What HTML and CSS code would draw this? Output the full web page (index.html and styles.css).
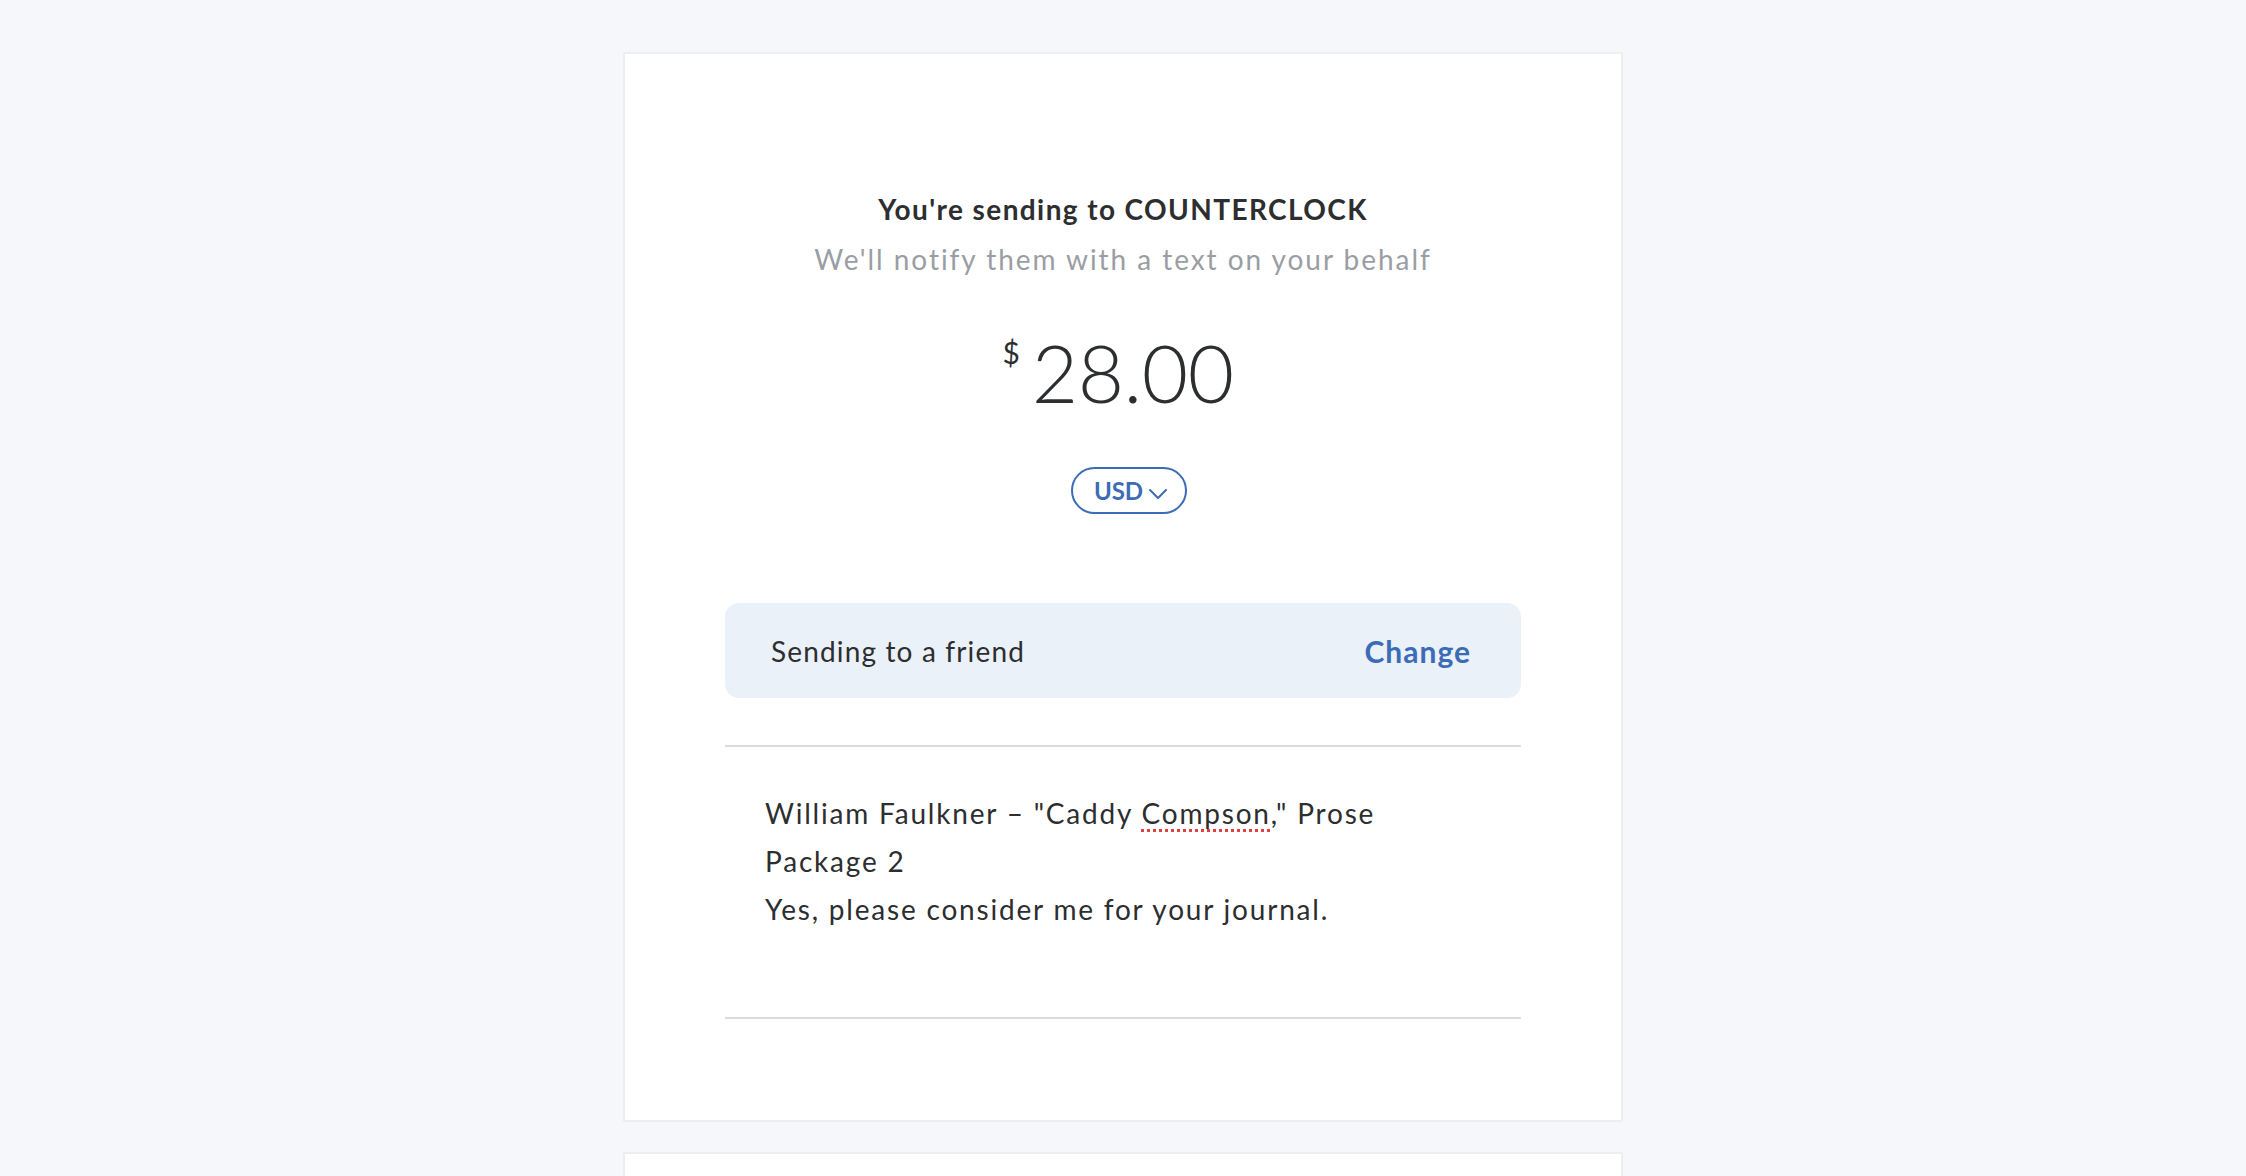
FILE: index.html
```html
<!DOCTYPE html>
<html lang="en">
<head>
<meta charset="utf-8">
<title>Send money</title>
<link rel="stylesheet" href="styles.css">
</head>
<body>
<main class="page">
  <section class="card">
    <h1 class="title">You're sending to COUNTERCLOCK</h1>
    <p class="subtitle">We'll notify them with a text on your behalf</p>
    <div class="amount">
      <span class="currency-symbol">$</span><span class="value">28.00</span>
    </div>
    <div class="currency-row">
      <button class="currency-pill" type="button">USD<svg class="chevron" viewBox="0 0 20 12" width="20" height="12"><path d="M2 2 L10 10 L18 2" fill="none" stroke="currentColor" stroke-width="2" stroke-linecap="round" stroke-linejoin="round"/></svg></button>
    </div>
    <div class="send-type">
      <span class="send-type-label">Sending to a friend</span>
      <a class="send-type-change" href="#">Change</a>
    </div>
    <div class="note">
      <p class="note-line">William Faulkner – "Caddy <span class="misspelled">Compson</span>," Prose</p>
      <p class="note-line">Package 2</p>
      <p class="note-line">Yes, please consider me for your journal.</p>
    </div>
  </section>
  <section class="card card-next"></section>
</main>
</body>
</html>
```

FILE: styles.css
```css
html, body {
  margin: 0;
  padding: 0;
}

body {
  background: #f5f7fa;
  font-family: Lato, "Open Sans", "Liberation Sans", sans-serif;
  color: #2c2e2f;
  overflow: hidden;
  height: 1176px;
}

.page {
  padding-top: 52px;
  display: flex;
  flex-direction: column;
  align-items: center;
  gap: 30px;
}

.card {
  background: #ffffff;
  border: 2px solid #eeeeee;
  padding: 137px 100px 101px;
  box-sizing: content-box;
  width: 796px;
}

.card-next {
  height: 200px;
  padding: 0;
  width: 996px;
}

.title {
  margin: 0;
  text-align: center;
  font-size: 28px;
  line-height: 36px;
  font-weight: 700;
  letter-spacing: 1.4px;
  color: #2c2e2f;
}

.subtitle {
  margin: 14px 0 0;
  text-align: center;
  font-size: 28px;
  line-height: 36px;
  font-weight: 400;
  letter-spacing: 1.95px;
  color: #9a9ea3;
}

.amount {
  margin-top: 45px;
  height: 100px;
  display: flex;
  justify-content: center;
  align-items: flex-start;
  padding-right: 10px;
}

.currency-symbol {
  font-size: 30px;
  line-height: 40px;
  margin-top: 10px;
  margin-right: 12px;
  font-weight: 400;
}

.value {
  font-size: 80px;
  line-height: 100px;
  font-weight: 300;
  letter-spacing: -0.5px;
}

.currency-row {
  margin-top: 45px;
  display: flex;
  justify-content: center;
  padding-left: 12px;
}

.currency-pill {
  display: flex;
  align-items: center;
  gap: 5px;
  height: 47px;
  width: 116px;
  justify-content: center;
  box-sizing: border-box;
  border: 2px solid #3b6cb5;
  border-radius: 24px;
  background: #ffffff;
  color: #3b6cb5;
  font-family: inherit;
  font-size: 24px;
  font-weight: 700;
  padding: 0 0 0 4px;
}

.chevron {
  margin-top: 6px;
}

.send-type {
  margin-top: 89px;
  height: 95px;
  background: #ebf1f9;
  border-radius: 14px;
  display: flex;
  align-items: center;
  justify-content: space-between;
  padding: 0 50px 0 46px;
}

.send-type-label {
  font-size: 28px;
  letter-spacing: 1.15px;
  color: #2c2e2f;
}

.send-type-change {
  font-size: 30px;
  font-weight: 700;
  color: #3b6cb5;
  text-decoration: none;
  letter-spacing: 1px;
}

.note {
  margin-top: 47px;
  border-top: 2px solid #dcdcdc;
  border-bottom: 2px solid #dcdcdc;
  padding: 42px 40px 84px;
}

.note-line {
  margin: 0;
  font-size: 28px;
  line-height: 48px;
  letter-spacing: 1.8px;
  color: #2c2e2f;
}

.misspelled {
  text-decoration: underline dotted #e0403f;
  text-decoration-thickness: 3px;
  text-underline-offset: 5px;
}
```
